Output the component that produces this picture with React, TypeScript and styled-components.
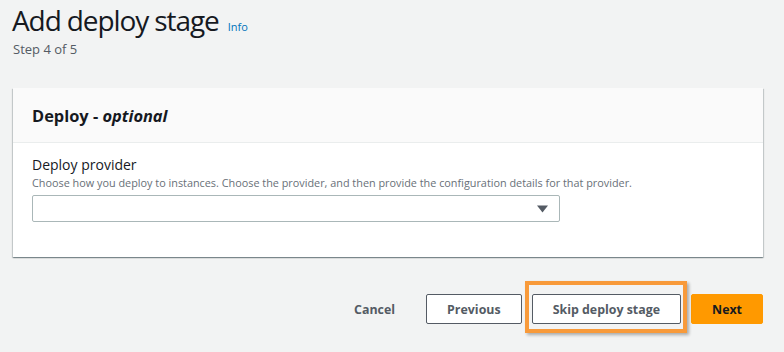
import React from 'react';
import styled, { createGlobalStyle } from 'styled-components';

const GlobalStyle = createGlobalStyle`
  html, body {
    margin: 0;
    padding: 0;
    background: #f2f3f3;
    font-family: "Open Sans", "Noto Sans", Arial, sans-serif;
    color: #16191f;
  }
`;

const Page = styled.div`
  width: 784px;
  height: 352px;
  box-sizing: border-box;
  padding: 0 21px 0 12px;
  overflow: hidden;
`;

const TitleRow = styled.div`
  display: flex;
  align-items: baseline;
  gap: 9px;
  margin-top: 1px;
`;

const Title = styled.h1`
  margin: 0;
  font-size: 28px;
  font-weight: 400;
  line-height: 38px;
  letter-spacing: -1.1px;
  color: #16191f;
`;

const InfoLink = styled.a`
  font-size: 11px;
  font-weight: 400;
  color: #0073bb;
  text-decoration: none;
`;

const Step = styled.div`
  margin-top: 1px;
  font-size: 13px;
  line-height: 18px;
  color: #545b64;
  padding-left: 1px;
`;

const Card = styled.section`
  margin-top: 30px;
  margin-left: 1px;
  background: #fff;
  box-shadow: 0 1px 1px 0 rgba(0, 28, 36, 0.3), 1px 1px 1px 0 rgba(0, 28, 36, 0.15),
    -1px 1px 1px 0 rgba(0, 28, 36, 0.15);
`;

const CardHeader = styled.header`
  height: 55px;
  box-sizing: border-box;
  padding: 0 19px;
  display: flex;
  align-items: center;
  background: #fafafa;
  border-bottom: 1px solid #eaeded;
`;

const CardTitle = styled.h2`
  margin: 0;
  font-size: 16.4px;
  font-weight: 700;
  color: #16191f;

  em {
    font-style: italic;
    font-weight: 700;
  }
`;

const CardBody = styled.div`
  padding: 12px 19px 35px;
`;

const Label = styled.div`
  font-size: 14px;
  line-height: 20px;
  color: #16191f;
`;

const Hint = styled.div`
  font-size: 10.85px;
  line-height: 15px;
  color: #687078;
`;

const Select = styled.div`
  margin-top: 5px;
  width: 528px;
  height: 27px;
  box-sizing: border-box;
  border: 1px solid #aab7b8;
  border-radius: 2px;
  background: #fff;
  display: flex;
  align-items: center;
  justify-content: flex-end;
  padding-right: 11px;
`;

const Actions = styled.div`
  margin-top: 37px;
  display: flex;
  justify-content: flex-end;
  align-items: center;
  gap: 10px;
`;

const Button = styled.button<{ $variant?: 'link' | 'normal' | 'primary' }>`
  height: 30px;
  box-sizing: border-box;
  padding: 0 20px;
  border-radius: 2px;
  font-family: inherit;
  font-size: 12.4px;
  font-weight: 700;
  cursor: pointer;
  border: 1px solid
    ${(p) => (p.$variant === 'normal' ? '#545b64' : p.$variant === 'primary' ? '#ff9900' : 'transparent')};
  background: ${(p) => (p.$variant === 'primary' ? '#ff9900' : p.$variant === 'normal' ? '#fff' : 'transparent')};
  color: ${(p) => (p.$variant === 'primary' ? '#16191f' : '#545b64')};
`;

const Highlight = styled.div`
  position: relative;
  display: flex;

  &::after {
    content: '';
    position: absolute;
    top: -13px;
    left: -7px;
    right: -6px;
    bottom: -9px;
    border: 4px solid #f89a3a;
    box-shadow: 2px 2px 3px rgba(0, 0, 0, 0.3);
    pointer-events: none;
  }
`;

const Caret = () => (
  <svg width="11" height="8" viewBox="0 0 11 8">
    <path d="M0 0.5 H11 L5.5 7.5 Z" fill="#545b64" />
  </svg>
);

export default function App() {
  return (
    <>
      <GlobalStyle />
      <Page>
        <TitleRow>
          <Title>Add deploy stage</Title>
          <InfoLink href="#">Info</InfoLink>
        </TitleRow>
        <Step>Step 4 of 5</Step>
        <Card>
          <CardHeader>
            <CardTitle>
              Deploy - <em>optional</em>
            </CardTitle>
          </CardHeader>
          <CardBody>
            <Label>Deploy provider</Label>
            <Hint>
              Choose how you deploy to instances. Choose the provider, and then provide the configuration
              details for that provider.
            </Hint>
            <Select>
              <Caret />
            </Select>
          </CardBody>
        </Card>
        <Actions>
          <Button $variant="link">Cancel</Button>
          <Button $variant="normal">Previous</Button>
          <Highlight>
            <Button $variant="normal">Skip deploy stage</Button>
          </Highlight>
          <Button $variant="primary">Next</Button>
        </Actions>
      </Page>
    </>
  );
}
